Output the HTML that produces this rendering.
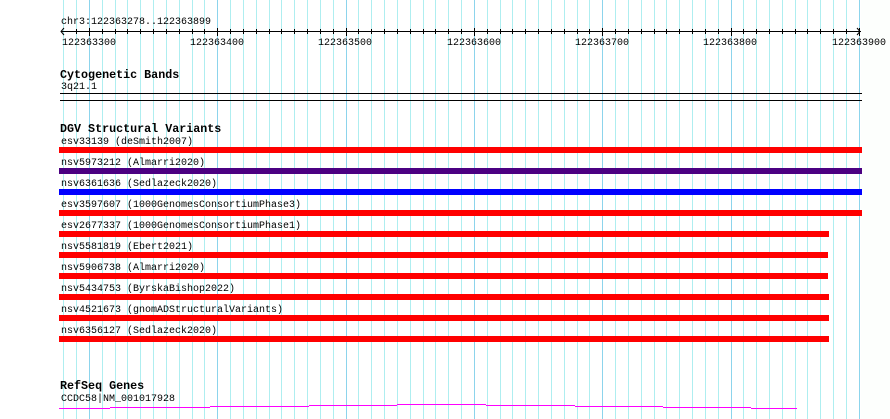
<!DOCTYPE html>
<html><head><meta charset="utf-8"><style>
html,body{margin:0;padding:0;background:#fdfffd;width:890px;height:419px;overflow:hidden}
svg text{font-family:"Liberation Mono","DejaVu Sans Mono",monospace;font-size:10px;fill:#000}
svg text.b{font-weight:bold;font-size:11.7px}
</style></head><body>
<svg width="890" height="419" xmlns="http://www.w3.org/2000/svg">
<rect width="861" height="419" fill="#ffffff"/>
<g id="grid"></g>
<g id="ticks"></g>
<script>
(function(){var g=document.getElementById('grid'),t=document.getElementById('ticks'),ns='http://www.w3.org/2000/svg';
for(var k=-2;k<=60;k++){var x=89+k*12.83;if(x<60||x>861)continue;var l=document.createElementNS(ns,'line');var maj=(k%10===0);
l.setAttribute('x1',Math.round(x)+0.5);l.setAttribute('x2',Math.round(x)+0.5);l.setAttribute('y1',0);l.setAttribute('y2',419);
l.setAttribute('stroke',maj?'#8cd4ec':'#aeeef0');l.setAttribute('stroke-width',1);g.appendChild(l);}
for(var k=-1;k<=60;k++){var x=89+k*12.83;if(x<62||x>861)continue;var l=document.createElementNS(ns,'line');var maj=(k%10===0);
l.setAttribute('x1',Math.round(x)+0.5);l.setAttribute('x2',Math.round(x)+0.5);l.setAttribute('y1',maj?28:29);l.setAttribute('y2',maj?36:34);
l.setAttribute('stroke','#000');t.appendChild(l);}
})();
</script>
<text x="61" y="24">chr3:122363278..122363899</text>
<line x1="61" y1="31.5" x2="861" y2="31.5" stroke="#000"/>
<polyline points="64,28 61,31.5 64,35" fill="none" stroke="#000"/>
<polyline points="857,28 860,31.5 857,35" fill="none" stroke="#000"/>
<text x="62" y="45">122363300</text>
<text x="190" y="45">122363400</text>
<text x="318" y="45">122363500</text>
<text x="447" y="45">122363600</text>
<text x="575" y="45">122363700</text>
<text x="703" y="45">122363800</text>
<text x="832" y="45">122363900</text>
<text class="b" x="60" y="78">Cytogenetic Bands</text>
<text x="61" y="89">3q21.1</text>
<rect x="60" y="93" width="802" height="1" fill="#000"/>
<rect x="60" y="100" width="802" height="1" fill="#000"/>
<text class="b" x="60" y="132">DGV Structural Variants</text>
<text x="61" y="144">esv33139 (deSmith2007)</text>
<rect x="59" y="147" width="803" height="6" fill="#ff0000"/>
<text x="61" y="165">nsv5973212 (Almarri2020)</text>
<rect x="59" y="168" width="803" height="6" fill="#4b0082"/>
<text x="61" y="186">nsv6361636 (Sedlazeck2020)</text>
<rect x="59" y="189" width="803" height="6" fill="#0000ff"/>
<text x="61" y="207">esv3597607 (1000GenomesConsortiumPhase3)</text>
<rect x="59" y="210" width="803" height="6" fill="#ff0000"/>
<text x="61" y="228">esv2677337 (1000GenomesConsortiumPhase1)</text>
<rect x="59" y="231" width="770" height="6" fill="#ff0000"/>
<text x="61" y="249">nsv5581819 (Ebert2021)</text>
<rect x="59" y="252" width="769" height="6" fill="#ff0000"/>
<text x="61" y="270">nsv5906738 (Almarri2020)</text>
<rect x="59" y="273" width="769" height="6" fill="#ff0000"/>
<text x="61" y="291">nsv5434753 (ByrskaBishop2022)</text>
<rect x="59" y="294" width="770" height="6" fill="#ff0000"/>
<text x="61" y="312">nsv4521673 (gnomADStructuralVariants)</text>
<rect x="59" y="315" width="770" height="6" fill="#ff0000"/>
<text x="61" y="333">nsv6356127 (Sedlazeck2020)</text>
<rect x="59" y="336" width="770" height="6" fill="#ff0000"/>
<text class="b" x="60" y="389">RefSeq Genes</text>
<text x="61" y="401">CCDC58|NM_001017928</text>
<g fill="#ff00ff">
<rect x="59" y="408" width="51" height="1"/>
<rect x="110" y="407" width="100" height="1"/>
<rect x="210" y="406" width="99" height="1"/>
<rect x="309" y="405" width="88" height="1"/>
<rect x="397" y="404" width="89" height="1"/>
<rect x="486" y="405" width="89" height="1"/>
<rect x="575" y="406" width="88" height="1"/>
<rect x="663" y="407" width="88" height="1"/>
<rect x="751" y="408" width="46" height="1"/>
</g>
</svg>
</body></html>
